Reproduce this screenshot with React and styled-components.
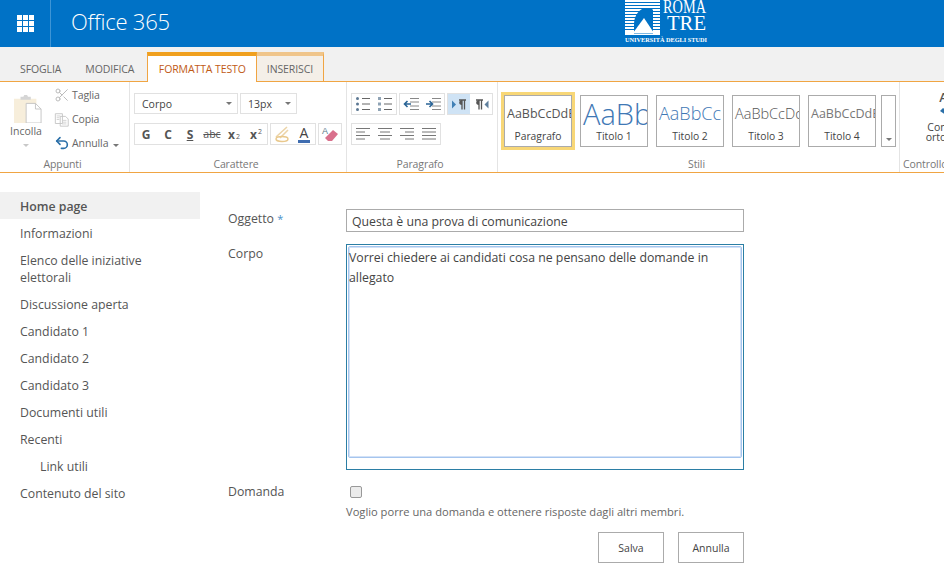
import React from 'react';
import styled, { createGlobalStyle } from 'styled-components';
import { Scissors, Undo2 } from 'lucide-react';

const FONT = '"Open Sans", "Noto Sans", "Liberation Sans", sans-serif';

const navItems = [
  { label: 'Home page', active: true },
  { label: 'Informazioni' },
  { label: 'Elenco delle iniziative elettorali' },
  { label: 'Discussione aperta' },
  { label: 'Candidato 1' },
  { label: 'Candidato 2' },
  { label: 'Candidato 3' },
  { label: 'Documenti utili' },
  { label: 'Recenti' },
  { label: 'Link utili', nested: true },
  { label: 'Contenuto del sito' },
];

const styleTiles = [
  { name: 'Paragrafo', sample: 'AaBbCcDdE', size: 12.5, color: '#555', selected: true },
  { name: 'Titolo 1', sample: 'AaBb', size: 29, color: '#3f78b5', light: true },
  { name: 'Titolo 2', sample: 'AaBbCc', size: 18, color: '#3f78b5', light: true },
  { name: 'Titolo 3', sample: 'AaBbCcDd', size: 14.5, color: '#555', light: true },
  { name: 'Titolo 4', sample: 'AaBbCcDdE', size: 12.5, color: '#777' },
];

const Lines = ({ rows }) => (
  <svg width="16" height="14" viewBox="0 0 16 14">
    {rows.map(([x1, x2], i) => (
      <line key={i} x1={x1} x2={x2} y1={1.5 + i * 3.5} y2={1.5 + i * 3.5} stroke="#777" strokeWidth="1" />
    ))}
  </svg>
);

const BulletList = ({ numbered }) => (
  <svg width="16" height="14" viewBox="0 0 16 14">
    {[1.5, 7, 12.5].map((y) => (
      <g key={y}>
        {numbered ? (
          <rect x="1" y={y - 1.5} width="3" height="3" fill="#8fa3b5" />
        ) : (
          <circle cx="2.5" cy={y} r="1.5" fill="#5d7893" />
        )}
        <line x1="7" x2="15" y1={y} y2={y} stroke="#666" />
      </g>
    ))}
  </svg>
);

const Indent = ({ reverse }) => (
  <svg width="17" height="14" viewBox="0 0 17 14">
    {[1.5, 5, 9, 12.5].map((y) => (
      <line key={y} x1="7" x2="16" y1={y} y2={y} stroke="#888" />
    ))}
    {reverse ? (
      <path d="M1 7h6M4.5 4l3 3-3 3" fill="none" stroke="#2a6496" strokeWidth="1.6" />
    ) : (
      <path d="M8 7H2M4.5 4l-3 3 3 3" fill="none" stroke="#2a6496" strokeWidth="1.6" />
    )}
  </svg>
);

const Pilcrow = ({ right }) => (
  <svg width="15" height="11" viewBox="0 0 15 11">
    {right ? <path d="M14.5 1.5l-4 4 4 4z" fill="#5f7f9c" /> : <path d="M0 1.5l4 4-4 4z" fill="#3f7fb5" />}
    <g transform={right ? 'translate(-5 0)' : undefined}>
      <path d="M7 1h7M10 1v9.5M12.5 1v9.5" fill="none" stroke="#555" strokeWidth="1.3" />
      <path d="M10 1C6.5 1 6 6 10 6z" fill="#555" />
    </g>
  </svg>
);

const App = () => (
  <Page>
    <GlobalStyle />
    <TopBar>
      <Waffle>
        {Array.from({ length: 9 }).map((_, i) => (
          <WaffleDot key={i} />
        ))}
      </Waffle>
      <Brand>Office 365</Brand>
      <Logo>
        <svg width="84" height="44" viewBox="0 0 84 44">
          {Array.from({ length: 12 }).map((_, i) => (
            <rect key={i} x="1" y={i * 3} width="35" height="2" fill="#fff" />
          ))}
          <path d="M10 34V24C10 15 16 8 22 8s7 2 7 2v24z" fill="#0072c6" />
          <path d="M9 33l11-15 10 15z" fill="#fff" />
          <rect x="1" y="32" width="35" height="1.5" fill="#fff" />
          <text x="39" y="13" fill="#fff" fontFamily="Liberation Serif" fontSize="19" textLength="43" lengthAdjust="spacingAndGlyphs">ROMA</text>
          <text x="43" y="30" fill="#fff" fontFamily="Liberation Serif" fontSize="20" textLength="39" lengthAdjust="spacingAndGlyphs">TRE</text>
          <text x="1" y="42" fill="#fff" fontFamily="Liberation Serif" fontSize="6" fontWeight="700" textLength="82" lengthAdjust="spacingAndGlyphs">UNIVERSITÀ DEGLI STUDI</text>
        </svg>
      </Logo>
    </TopBar>

    <TabRow>
      <Tab>SFOGLIA</Tab>
      <Tab>MODIFICA</Tab>
      <Tab $active>FORMATTA TESTO</Tab>
      <Tab $context>INSERISCI</Tab>
    </TabRow>

    <Ribbon>
      <Group $width={130}>
        <ClipboardBody>
          <PasteButton>
            <PasteIcon width="28" height="28" viewBox="0 0 30 30">
              <path d="M0 4h24v26H0z" fill="#f7eedb" />
              <path d="M7 4V2h3l1-2h3l1 2h3v3H7z" fill="#d5d5d5" />
              <path d="M13 9h10l6 6v15H13z" fill="#fff" stroke="#c4c4c4" />
              <path d="M23 9v6h6" fill="none" stroke="#c4c4c4" />
            </PasteIcon>
            <PasteLabel>Incolla</PasteLabel>
            <Caret $dim />
          </PasteButton>
          <ClipColumn>
            <ClipRow>
              <Scissors size={16} color="#bcbcbc" strokeWidth={1.5} />
              <span>Taglia</span>
            </ClipRow>
            <ClipRow>
              <svg width="16" height="15" viewBox="0 0 18 16">
                <path d="M1.5 1.5h8v11h-8zM7 4.5h6l3 3v8H7z" fill="#fff" stroke="#c4c4c4" />
                <path d="M9 9h5M9 11h5M9 13h5M3 4h4M3 6h3M3 8h3" stroke="#d0d0d0" />
              </svg>
              <span>Copia</span>
            </ClipRow>
            <ClipRow>
              <Undo2 size={16} color="#2a6fa8" strokeWidth={2.4} />
              <span>Annulla</span>
              <CaretGap><Caret /></CaretGap>
            </ClipRow>
          </ClipColumn>
        </ClipboardBody>
        <GroupLabel>Appunti</GroupLabel>
      </Group>

      <Group $width={217}>
        <Stack $left={4}>
          <ToolLine>
            <Select $width={104}>
              Corpo
              <Caret />
            </Select>
            <Select $width={57}>
              13px
              <Caret />
            </Select>
          </ToolLine>
          <ToolLine>
            <ToolSet>
              <FormatGlyph><b>G</b></FormatGlyph>
              <FormatGlyph><b>C</b></FormatGlyph>
              <FormatGlyph $underline><b>S</b></FormatGlyph>
              <FormatGlyph $strike>abc</FormatGlyph>
              <FormatGlyph><b>x</b><Script $sub>2</Script></FormatGlyph>
              <FormatGlyph><b>x</b><Script>2</Script></FormatGlyph>
            </ToolSet>
            <ToolSet>
              <ToolButton $width={22}>
                <svg width="18" height="18" viewBox="0 0 18 18">
                  <path d="M3 12L14 2M7 13L15 5" fill="none" stroke="#ecd4a8" strokeWidth="1.6" />
                  <ellipse cx="9" cy="14" rx="6" ry="2.5" fill="none" stroke="#e9c88c" strokeWidth="1.4" />
                </svg>
              </ToolButton>
              <ToolButton $width={22}>
                <FontColor>A</FontColor>
              </ToolButton>
            </ToolSet>
            <ToolSet>
              <ToolButton $width={22}>
                <svg width="18" height="18" viewBox="0 0 18 18">
                  <path d="M7 16l-3-3 8-8 5 4-6 7z" fill="#d9708c" />
                  <text x="1" y="9" fontSize="9" fill="#5b7a8c" fontFamily="Liberation Sans">A</text>
                </svg>
              </ToolButton>
            </ToolSet>
          </ToolLine>
        </Stack>
        <GroupLabel>Carattere</GroupLabel>
      </Group>

      <Group $width={151}>
        <Stack $left={4}>
          <ToolLine>
            <ToolSet>
              <ToolButton $width={22}><BulletList /></ToolButton>
              <ToolButton $width={22}><BulletList numbered /></ToolButton>
            </ToolSet>
            <ToolSet>
              <ToolButton $width={22}><Indent /></ToolButton>
              <ToolButton $width={22}><Indent reverse /></ToolButton>
            </ToolSet>
            <ToolSet>
              <ToolButton $width={22} $on><Pilcrow /></ToolButton>
              <ToolButton $width={22}><Pilcrow right /></ToolButton>
            </ToolSet>
          </ToolLine>
          <ToolLine>
            <ToolSet>
              <ToolButton $width={22}><Lines rows={[[1, 15], [1, 10], [1, 15], [1, 10]]} /></ToolButton>
              <ToolButton $width={22}><Lines rows={[[1, 15], [3, 13], [1, 15], [3, 13]]} /></ToolButton>
              <ToolButton $width={22}><Lines rows={[[1, 15], [6, 15], [1, 15], [6, 15]]} /></ToolButton>
              <ToolButton $width={22}><Lines rows={[[1, 15], [1, 15], [1, 15], [1, 15]]} /></ToolButton>
            </ToolSet>
          </ToolLine>
        </Stack>
        <GroupLabel>Paragrafo</GroupLabel>
      </Group>

      <Group $width={402}>
        <Tiles>
          {styleTiles.map((tile) => (
            <Tile key={tile.name} $selected={tile.selected}>
              <TileSample $size={tile.size} $color={tile.color} $light={tile.light}>{tile.sample}</TileSample>
              <TileName>{tile.name}</TileName>
            </Tile>
          ))}
          <TileScroll><Caret /></TileScroll>
        </Tiles>
        <GroupLabel>Stili</GroupLabel>
      </Group>

      <LastGroup>
        <Spelling>
          <SpellA>A</SpellA>
          <SpellIcon width="14" height="12" viewBox="0 0 14 12">
            <path d="M1 6l3-3 6 5-2 3z" fill="#2a6fa8" />
          </SpellIcon>
          <SpellText>Controllo<br />ortografia</SpellText>
        </Spelling>
        <GroupLabel $left>Controllo</GroupLabel>
      </LastGroup>
    </Ribbon>

    <Main>
      <Nav>
        {navItems.map((item) => (
          <NavItem key={item.label} $active={item.active} $nested={item.nested}>{item.label}</NavItem>
        ))}
      </Nav>
      <Form>
        <Row $height={35}>
          <FieldLabel>Oggetto <Required>*</Required></FieldLabel>
          <TextField>Questa è una prova di comunicazione</TextField>
        </Row>
        <Row $height={238}>
          <FieldLabel>Corpo</FieldLabel>
          <EditorFrame>
            <Editor>Vorrei chiedere ai candidati cosa ne pensano delle domande in allegato</Editor>
          </EditorFrame>
        </Row>
        <Row $height={50}>
          <FieldLabel>Domanda</FieldLabel>
          <div>
            <CheckBox type="checkbox" />
            <Hint>Voglio porre una domanda e ottenere risposte dagli altri membri.</Hint>
          </div>
        </Row>
        <Actions>
          <ActionButton>Salva</ActionButton>
          <ActionButton>Annulla</ActionButton>
        </Actions>
      </Form>
    </Main>
  </Page>
);

const GlobalStyle = createGlobalStyle`
  html, body {
    margin: 0;
    padding: 0;
    background: #fff;
    overflow: hidden;
  }
`;

const Page = styled.div`
  width: 944px;
  height: 569px;
  overflow: hidden;
  font-family: ${FONT};
  font-size: 12px;
  color: #444;
`;

const TopBar = styled.header`
  height: 47px;
  background: #0072c6;
  display: flex;
  align-items: stretch;
  color: #fff;
`;

const Waffle = styled.div`
  width: 51px;
  box-sizing: border-box;
  border-right: 1px solid #3d95d6;
  display: grid;
  grid-template-columns: repeat(3, 5px);
  grid-auto-rows: 5px;
  gap: 1px;
  align-content: center;
  justify-content: center;
`;

const WaffleDot = styled.span`
  background: #fff;
`;

const Brand = styled.div`
  margin-left: 20px;
  font-size: 22px;
  line-height: 43px;
  letter-spacing: -0.2px;
  font-weight: 300;
`;

const Logo = styled.div`
  margin-left: 454px;
  width: 84px;
  height: 44px;
`;

const TabRow = styled.nav`
  height: 35px;
  box-sizing: border-box;
  background: #f1f1f1;
  border-bottom: 1px solid #f0a543;
  display: flex;
  align-items: flex-end;
  padding-left: 8px;
`;

const Tab = styled.div`
  height: ${(p) => (p.$active ? '30px' : '29px')};
  box-sizing: border-box;
  padding: 0 ${(p) => (p.$active ? '10.5px' : p.$context ? '9.5px' : '12px')};
  font-size: 10.5px;
  line-height: 26px;
  letter-spacing: -0.1px;
  white-space: nowrap;
  color: ${(p) => (p.$active ? '#bf5a15' : '#666')};
  background: ${(p) => (p.$active ? '#fff' : p.$context ? '#f4efe8' : 'transparent')};
  border-top: 4px solid ${(p) => (p.$active ? '#f0a01e' : p.$context ? '#f0c58a' : 'transparent')};
  border-left: ${(p) => (p.$active ? '1px solid #f0a543' : 'none')};
  border-right: ${(p) => (p.$active || p.$context ? '1px solid #f0a543' : 'none')};
  margin-bottom: ${(p) => (p.$active ? '-1px' : '0')};
  margin-left: ${(p) => (p.$active ? '1px' : '0')};
`;

const Ribbon = styled.section`
  height: 91px;
  box-sizing: border-box;
  border-bottom: 1px solid #f0a543;
  display: flex;
`;

const Group = styled.div`
  width: ${(p) => p.$width}px;
  flex: none;
  box-sizing: border-box;
  border-right: 1px solid #e4e4e4;
  display: flex;
  flex-direction: column;
  justify-content: space-between;
  position: relative;
`;

const LastGroup = styled(Group)`
  width: 44px;
  border-right: none;
  overflow: hidden;
`;

const GroupLabel = styled.div`
  height: 18px;
  line-height: 20px;
  font-size: 10.5px;
  color: #777;
  letter-spacing: -0.1px;
  text-align: ${(p) => (p.$left ? 'left' : 'center')};
  padding: ${(p) => (p.$left ? '0 0 0 3px' : '0 4px 0 0')};
  white-space: nowrap;
`;

const ClipboardBody = styled.div`
  display: flex;
  padding-top: 4px;
`;

const PasteButton = styled.div`
  width: 52px;
  display: flex;
  flex-direction: column;
  align-items: center;
  padding-top: 9px;
  box-sizing: border-box;
`;

const PasteIcon = styled.svg`
  margin-left: 4px;
`;

const PasteLabel = styled.div`
  font-size: 10.5px;
  line-height: 14px;
  color: #666;
  margin-top: 1px;
  margin-bottom: 6px;
`;

const Caret = styled.span`
  display: inline-block;
  width: 0;
  height: 0;
  border-left: 3px solid transparent;
  border-right: 3px solid transparent;
  border-top: 3px solid ${(p) => (p.$dim ? '#c8c8c8' : '#777')};
`;

const CaretGap = styled.span`
  display: flex;
  margin: 4px 0 0 3px;
`;

const ClipColumn = styled.div`
  display: flex;
  flex-direction: column;
  gap: 6px;
  padding-left: 2px;
`;

const ClipRow = styled.div`
  height: 18px;
  display: flex;
  align-items: center;
  gap: 2px;
  font-size: 10.5px;
  letter-spacing: -0.1px;
  color: #666;
  white-space: nowrap;
`;

const Stack = styled.div`
  padding: 11px 0 0 ${(p) => p.$left}px;
  display: flex;
  flex-direction: column;
  gap: 8px;
`;

const ToolLine = styled.div`
  display: flex;
  align-items: flex-start;
  gap: 2px;
  height: 22px;
`;

const Select = styled.div`
  width: ${(p) => p.$width}px;
  height: 21px;
  box-sizing: border-box;
  border: 1px solid #e1e1e1;
  display: flex;
  align-items: center;
  justify-content: space-between;
  padding: 0 5px 0 7px;
  font-size: 10.5px;
  color: #444;
`;

const ToolSet = styled.div`
  height: 22px;
  box-sizing: border-box;
  border: 1px solid #e1e1e1;
  display: flex;
`;

const ToolButton = styled.div`
  width: ${(p) => p.$width}px;
  display: flex;
  align-items: center;
  justify-content: center;
  background: ${(p) => (p.$on ? '#cfe3f5' : 'transparent')};
`;

const FormatGlyph = styled.div`
  width: 22px;
  display: flex;
  align-items: center;
  justify-content: center;
  font-size: ${(p) => (p.$strike ? '10.5px' : '12px')};
  color: #555;
  text-decoration: ${(p) => (p.$strike ? 'line-through' : p.$underline ? 'underline' : 'none')};
`;

const Script = styled.span`
  font-size: 7px;
  align-self: ${(p) => (p.$sub ? 'flex-end' : 'flex-start')};
  margin: ${(p) => (p.$sub ? '0 0 3px 1px' : '3px 0 0 1px')};
`;

const FontColor = styled.span`
  font-size: 14px;
  line-height: 14px;
  color: #444;
  border-bottom: 3px solid #3f6db0;
  padding: 0 2px;
`;

const Tiles = styled.div`
  display: flex;
  align-items: flex-start;
  gap: 8px;
  padding: 13px 0 0 6px;
`;

const Tile = styled.div`
  width: 68px;
  height: 52px;
  flex: none;
  box-sizing: border-box;
  border: 1px solid #ababab;
  display: flex;
  flex-direction: column;
  align-items: center;
  overflow: hidden;
  ${(p) => (p.$selected ? 'outline: 3px solid #f8d777;' : '')}
`;

const TileSample = styled.div`
  height: 33px;
  line-height: 35px;
  font-size: ${(p) => p.$size}px;
  color: ${(p) => p.$color};
  font-weight: ${(p) => (p.$light ? 300 : 400)};
  white-space: nowrap;
  width: 100%;
  padding-left: 2px;
  box-sizing: border-box;
  overflow: hidden;
`;

const TileName = styled.div`
  font-size: 10.3px;
  line-height: 14px;
  color: #444;
`;

const TileScroll = styled.div`
  width: 15px;
  height: 52px;
  flex: none;
  box-sizing: border-box;
  border: 1px solid #ababab;
  margin-left: -3px;
  display: flex;
  align-items: flex-end;
  justify-content: center;
  padding-bottom: 5px;
`;

const Spelling = styled.div`
  height: 73px;
  width: 100px;
  display: flex;
  flex-direction: column;
  align-items: center;
  padding-top: 7px;
  box-sizing: border-box;
`;

const SpellA = styled.div`
  font-size: 13px;
  line-height: 16px;
  font-weight: 600;
  color: #555;
  margin-right: 13px;
`;

const SpellIcon = styled.svg`
  margin-right: 8px;
`;

const SpellText = styled.div`
  font-size: 10.5px;
  line-height: 10px;
  text-align: center;
  margin-top: 5px;
`;

const Main = styled.main`
  display: flex;
  padding-top: 19px;
`;

const Nav = styled.aside`
  width: 200px;
  flex: none;
`;

const NavItem = styled.div`
  padding: 6px 20px 4px ${(p) => (p.$nested ? '40px' : '20px')};
  font-size: 12.3px;
  line-height: 17px;
  color: #555;
  background: ${(p) => (p.$active ? '#f1f1f1' : 'transparent')};
  font-weight: ${(p) => (p.$active ? 600 : 400)};
`;

const Form = styled.form`
  margin-left: 28px;
  width: 516px;
  padding-top: 17px;
`;

const Row = styled.div`
  height: ${(p) => p.$height}px;
  display: flex;
`;

const FieldLabel = styled.div`
  width: 118px;
  flex: none;
  margin-top: 1px;
  font-size: 12.3px;
  line-height: 18px;
  color: #555;
`;

const Required = styled.span`
  color: #4a90c8;
  font-size: 11px;
`;

const TextField = styled.div`
  width: 398px;
  height: 23px;
  box-sizing: border-box;
  border: 1px solid #ababab;
  padding: 0 5px;
  font-size: 12.3px;
  line-height: 23px;
  color: #444;
`;

const EditorFrame = styled.div`
  width: 398px;
  height: 226px;
  box-sizing: border-box;
  border: 1px solid #2b7ea5;
  padding: 1px 1px 11px;
`;

const Editor = styled.div`
  height: 100%;
  box-sizing: border-box;
  border: 1px solid #a5c5ee;
  box-shadow: inset 0 0 0 1px #d3e2f7;
  border-radius: 2px;
  padding-top: 1px;
  font-size: 12.3px;
  line-height: 20px;
  color: #444;
`;

const CheckBox = styled.input`
  appearance: none;
  display: block;
  box-sizing: border-box;
  margin: 4px 0 0 4px;
  width: 12px;
  height: 12px;
  border: 1px solid #999;
  border-radius: 2px;
  background: #ececec;
`;

const Hint = styled.div`
  margin-top: 5px;
  font-size: 11.15px;
  line-height: 17px;
  color: #666;
`;

const Actions = styled.div`
  display: flex;
  justify-content: flex-end;
  gap: 14px;
`;

const ActionButton = styled.div`
  width: 66px;
  height: 31px;
  box-sizing: border-box;
  border: 1px solid #ababab;
  font-size: 10.5px;
  line-height: 30px;
  text-align: center;
  color: #444;
`;

export default App;
